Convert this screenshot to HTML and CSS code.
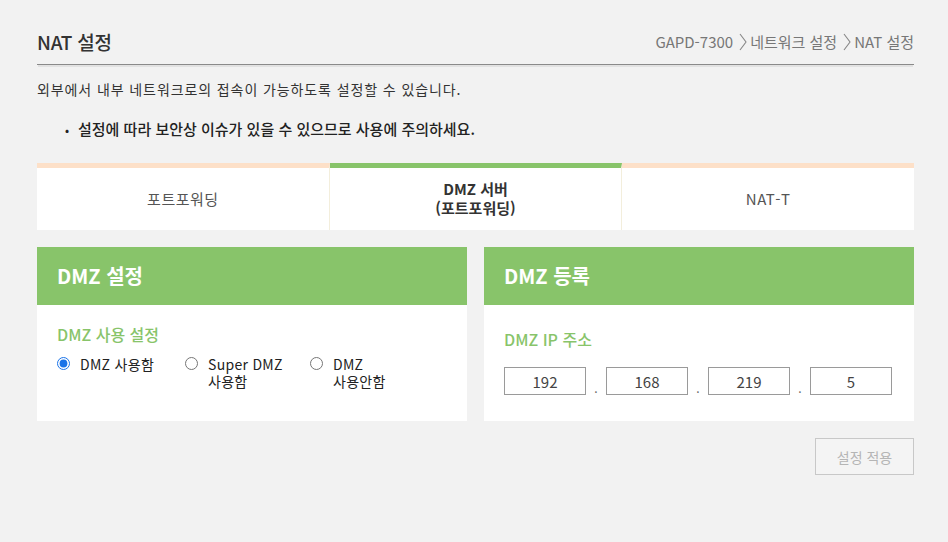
FILE: index.html
```html
<!DOCTYPE html>
<html lang="ko">
  <head>
    <meta charset="UTF-8" />
    <meta name="viewport" content="width=device-width, initial-scale=1.0" />
    <title>NAT 설정</title>
    <link rel="stylesheet" href="styles.css">
  </head>
  <body>
    <div class="container">
      <!-- Page title + breadcrumb -->
      <div class="page-head">
        <h1 class="page-title">NAT 설정</h1>
        <div class="breadcrumb">
          <span>GAPD-7300</span>
          <svg class="sep" width="8" height="18" viewBox="0 0 8 18"><path d="M1 1 L7 9 L1 17" fill="none" stroke="#888" stroke-width="1.1" /></svg>
          <span>네트워크 설정</span>
          <svg class="sep" width="8" height="18" viewBox="0 0 8 18"><path d="M1 1 L7 9 L1 17" fill="none" stroke="#888" stroke-width="1.1" /></svg>
          <span>NAT 설정</span>
        </div>
      </div>

      <p class="desc">외부에서 내부 네트워크로의 접속이 가능하도록 설정할 수 있습니다.</p>
      <ul class="notice">
        <li>설정에 따라 보안상 이슈가 있을 수 있으므로 사용에 주의하세요.</li>
      </ul>

      <!-- Tabs -->
      <div class="tabs">
        <div class="tab">포트포워딩</div>
        <div class="tab active">DMZ 서버<br />(포트포워딩)</div>
        <div class="tab">NAT-T</div>
      </div>

      <!-- Panels -->
      <div class="panels">
        <div class="panel">
          <div class="panel-head">DMZ 설정</div>
          <div class="panel-body left">
            <div class="field-label">DMZ 사용 설정</div>
            <div class="radios">
              <label class="radio">
                <input type="radio" name="dmz" checked />
                <span>DMZ 사용함</span>
              </label>
              <label class="radio">
                <input type="radio" name="dmz" />
                <span>Super DMZ<br />사용함</span>
              </label>
              <label class="radio">
                <input type="radio" name="dmz" />
                <span>DMZ<br />사용안함</span>
              </label>
            </div>
          </div>
        </div>

        <div class="panel">
          <div class="panel-head">DMZ 등록</div>
          <div class="panel-body right">
            <div class="field-label">DMZ IP 주소</div>
            <div class="ip-row">
              <input class="ip" type="text" value="192" />
              <span class="dot">.</span>
              <input class="ip" type="text" value="168" />
              <span class="dot">.</span>
              <input class="ip" type="text" value="219" />
              <span class="dot">.</span>
              <input class="ip" type="text" value="5" />
            </div>
          </div>
        </div>
      </div>

      <div class="actions">
        <button class="apply" disabled>설정 적용</button>
      </div>
    </div>
  </body>
</html>
```

FILE: styles.css
```css
body {
  font-family: "Noto Sans CJK KR", "Noto Sans", sans-serif;
  background: #f2f2f2;
  margin: 0;
  padding: 0;
  color: #333;
}
.container {
  width: 877px;
  margin-left: 37px;
  padding-top: 27px;
}
/* Title row */
.page-head {
  display: flex;
  justify-content: space-between;
  align-items: center;
  height: 29px;
  padding-bottom: 8px;
  border-bottom: 1px solid #8a8a8a;
  box-shadow: 0 3px 0 -1px #e2e2e2;
}
.page-title {
  margin: 0;
  font-size: 19px;
  font-weight: 500;
  color: #333;
  letter-spacing: -0.3px;
}
.breadcrumb {
  display: flex;
  align-items: center;
  font-size: 15px;
  color: #777;
  letter-spacing: 0;
}
.breadcrumb .sep {
  margin: 0 3px 0 6px;
}
.desc {
  margin: 14px 0 0;
  font-size: 14px;
  color: #333;
  line-height: 20px;
  letter-spacing: 0.9px;
}
.notice {
  margin: 20px 0 0;
  padding-left: 28px;
  list-style: none;
  font-size: 15px;
  font-weight: 500;
  color: #222;
  line-height: 20px;
  letter-spacing: 0;
}
.notice li::before {
  content: "•";
  display: inline-block;
  width: 13px;
  font-size: 12px;
  font-weight: 400;
}
/* Tabs */
.tabs {
  display: flex;
  margin-top: 23px;
  background: #fff;
  height: 67px;
}
.tab {
  flex: 1;
  display: flex;
  align-items: center;
  justify-content: center;
  text-align: center;
  border-top: 5px solid #fde0c8;
  border-right: 1px solid #f3eedc;
  font-size: 15px;
  color: #555;
  line-height: 19px;
  letter-spacing: 0.5px;
  padding-bottom: 2px;
}
.tab:last-child {
  border-right: none;
}
.tab.active {
  border-top-color: #88c46a;
  font-weight: 700;
  color: #333;
  letter-spacing: 0;
}
/* Panels */
.panels {
  display: flex;
  gap: 17px;
  margin-top: 17px;
}
.panel {
  flex: 1;
  background: #fff;
  height: 174px;
}
.panel-head {
  background: #88c46a;
  height: 58px;
  line-height: 58px;
  padding-left: 20px;
  color: #fff;
  font-size: 20px;
  font-weight: 700;
}
.panel-body {
  padding: 0 20px;
}
.panel-body.left {
  padding-top: 19px;
}
.panel-body.right {
  padding-top: 24px;
}
.field-label {
  color: #88c46a;
  font-size: 16px;
  font-weight: 500;
  line-height: 20px;
}
.radios {
  display: flex;
  margin-top: 12px;
}
.radio {
  display: flex;
  align-items: flex-start;
  width: 128px;
  font-size: 14px;
  color: #222;
  line-height: 17px;
  letter-spacing: 0.3px;
}
.radio:nth-child(2) {
  width: 125px;
}
.radio input {
  margin: 1px 10px 0 0;
  width: 13px;
  height: 13px;
  accent-color: #1a73e8;
}
.radio span {
  padding-top: 0;
}
.ip-row {
  display: flex;
  align-items: flex-end;
  margin-top: 18px;
}
.ip {
  width: 82px;
  height: 28px;
  box-sizing: border-box;
  border: 1px solid #9a9a9a;
  background: #fff;
  text-align: center;
  font-family: "Noto Sans CJK KR", "Noto Sans", sans-serif;
  font-size: 15px;
  color: #444;
  padding: 0;
}
.dot {
  width: 20px;
  text-align: center;
  font-size: 12px;
  color: #666;
  line-height: 14px;
}
/* Apply button */
.actions {
  display: flex;
  justify-content: flex-end;
  margin-top: 17px;
}
.apply {
  width: 99px;
  height: 37px;
  border: 1px solid #c8c8c8;
  background: #f4f4f4;
  color: #b5b5b5;
  font-family: "Noto Sans CJK KR", "Noto Sans", sans-serif;
  font-size: 14px;
}
```
